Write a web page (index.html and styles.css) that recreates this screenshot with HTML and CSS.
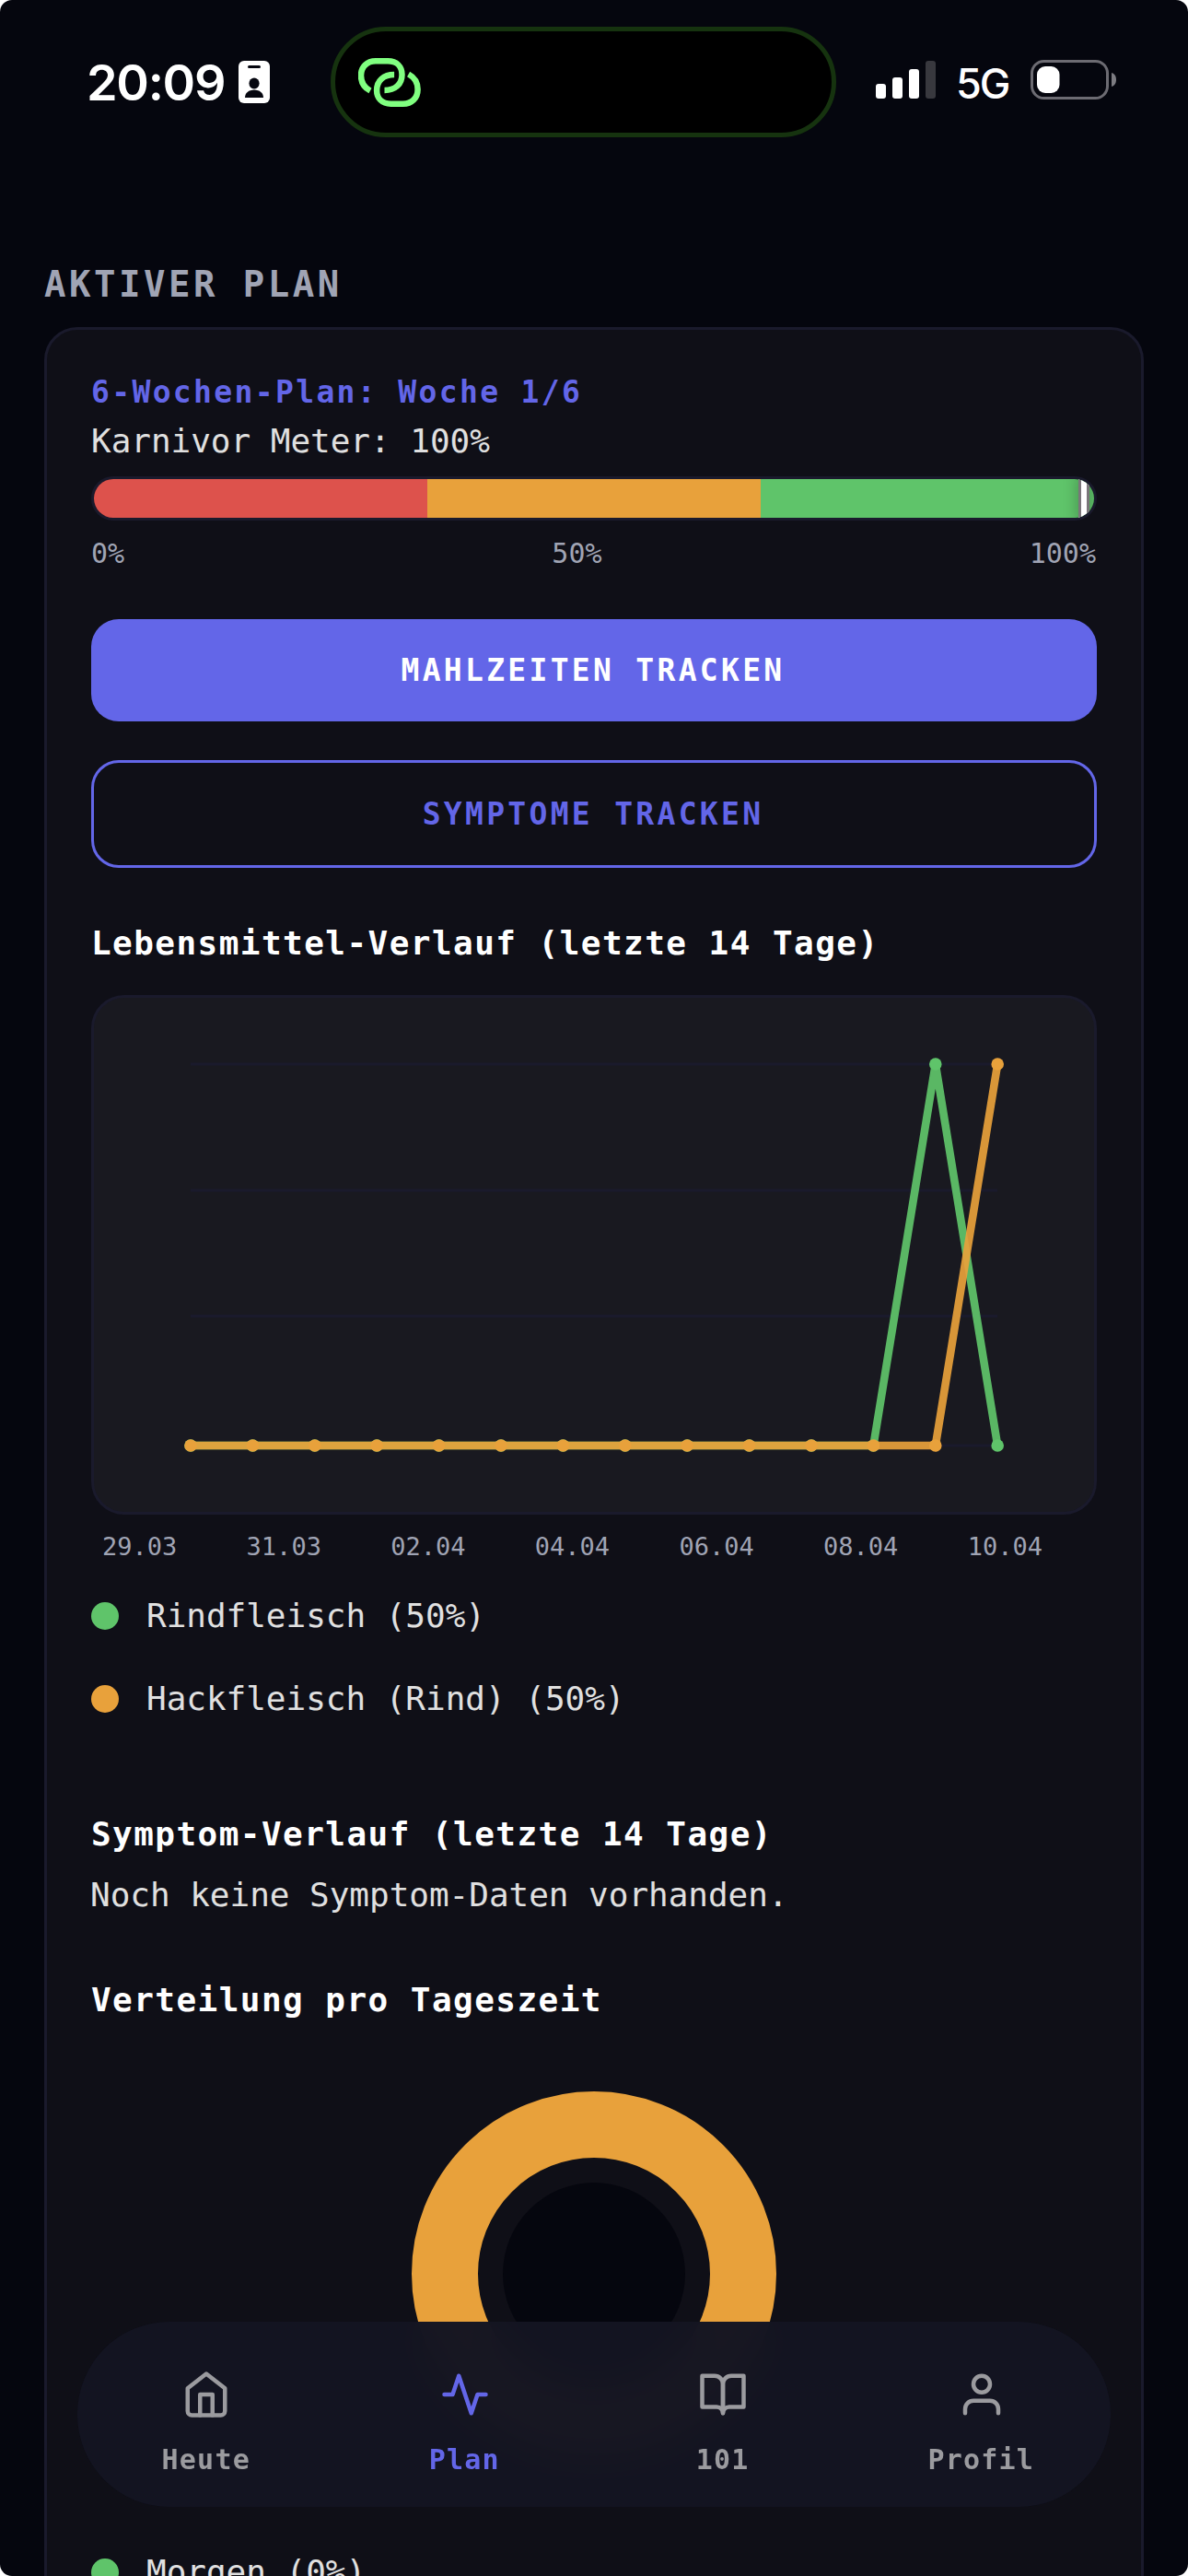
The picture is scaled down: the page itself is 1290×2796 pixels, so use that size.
FILE: index.html
```
<!DOCTYPE html>
<html lang="de">

<head>
  <meta charset="UTF-8">
  <meta name="viewport" content="width=device-width, initial-scale=1.0">
  <title>Plan</title>
  <link rel="stylesheet" href="styles.css">
</head>

<body>
  <div class="screen">
    <!-- status bar -->
    <div class="statusbar">
      <div class="status-left">
        <span class="time">20:09</span>
        <svg class="badge-icon" width="34" height="46" viewBox="0 0 34 46">
          <rect width="34" height="46" rx="6" fill="#fff" />
          <rect x="10" y="5" width="14" height="3" rx="1.500" fill="#05060f" />
          <ellipse cx="17" cy="24.500" rx="5.600" ry="6" fill="#05060f" />
          <path d="M7 40c0-5 4-8.500 10-8.500s10 3.500 10 8.500z" fill="#05060f" />
        </svg>
      </div>
      <div class="island">
        <svg width="68" height="53" viewBox="0 0 68 53" fill="none" stroke="#80ff80" stroke-width="6.500">
          <path d="M13 35.500C6.500 32 3 26 3 19C3 9.500 9.500 3.300 19 3.300H32C42 3.300 47.500 9.500 47.500 18C47.500 28.500 40 35 28.500 35" />
          <path d="M13 35.500C6.500 32 3 26 3 19C3 9.500 9.500 3.300 19 3.300H32C42 3.300 47.500 9.500 47.500 18C47.500 28.500 40 35 28.500 35" transform="rotate(180 33.800 26.500)" />
        </svg>
      </div>
      <div class="status-right">
        <svg width="65" height="42" viewBox="0 0 65 42" fill="#fff">
          <rect x="0" y="25" width="11" height="16" rx="3" />
          <rect x="18" y="18" width="11" height="23" rx="3" />
          <rect x="36" y="9" width="11" height="32" rx="3" />
          <rect x="54" y="0" width="11" height="41" rx="3" fill="#38383e" />
        </svg>
        <span class="network">5G</span>
        <svg class="battery" width="93" height="43" viewBox="0 0 93 43">
          <rect x="1.500" y="1.500" width="82" height="40" rx="13" fill="none" stroke="#6c6b72" stroke-width="3" />
          <rect x="7" y="7" width="24.500" height="29" rx="9" fill="#fff" />
          <path d="M88 14c3.500 1 5 4 5 7.500s-1.500 6.500-5 7.500z" fill="#7d7c82" />
        </svg>
      </div>
    </div>

    <div class="content">
      <h1 class="page-title">AKTIVER PLAN</h1>

      <div class="card">
        <div class="plan-title">6-Wochen-Plan: Woche 1/6</div>
        <div class="text meter-text">Karnivor Meter: 100%</div>
        <div class="meter">
          <div class="zone red"></div>
          <div class="zone orange"></div>
          <div class="zone green"></div>
          <div class="marker"></div>
        </div>
        <div class="meter-scale">
          <span>0%</span>
          <span>50%</span>
          <span>100%</span>
        </div>

        <button class="btn btn-primary">MAHLZEITEN TRACKEN</button>
        <button class="btn btn-outline">SYMPTOME TRACKEN</button>

        <h2 class="heading food-heading">Lebensmittel-Verlauf (letzte 14 Tage)</h2>
        <div class="chart">
          <svg id="chart" width="1086" height="558" viewBox="0 0 1086 558"></svg>
        </div>
        <div class="dates">
          <span>29.03</span>
          <span>31.03</span>
          <span>02.04</span>
          <span>04.04</span>
          <span>06.04</span>
          <span>08.04</span>
          <span>10.04</span>
        </div>
        <div class="legend">
          <div class="legend-item"><i class="dot green"></i>Rindfleisch (50%)</div>
          <div class="legend-item"><i class="dot orange"></i>Hackfleisch (Rind) (50%)</div>
        </div>

        <h2 class="heading symptom-heading">Symptom-Verlauf (letzte 14 Tage)</h2>
        <div class="text empty-text">Noch keine Symptom-Daten vorhanden.</div>

        <h2 class="heading time-heading">Verteilung pro Tageszeit</h2>
        <svg class="donut" width="396" height="396" viewBox="0 0 396 396">
          <circle cx="198" cy="198" r="162" fill="none" stroke="#e8a13b" stroke-width="72" />
          <circle cx="198" cy="198" r="99" fill="#05060e" />
        </svg>
        <div class="legend time-legend">
          <div class="legend-item"><i class="dot green"></i>Morgen (0%)</div>
        </div>
      </div>
    </div>

    <!-- tab bar -->
    <div class="tabbar">
      <div class="tab">
        <svg class="icon" viewBox="0 0 24 24">
          <path d="M3 9l9-7 9 7v11a2 2 0 0 1-2 2H5a2 2 0 0 1-2-2z" />
          <path d="M9 22V12h6v10" />
        </svg>
        <span class="tab-label">Heute</span>
      </div>
      <div class="tab active">
        <svg class="icon" viewBox="0 0 24 24">
          <path d="M22 12h-4l-3 9L9 3l-3 9H2" />
        </svg>
        <span class="tab-label">Plan</span>
      </div>
      <div class="tab">
        <svg class="icon" viewBox="0 0 24 24">
          <path d="M2 3h6a4 4 0 0 1 4 4v14a3 3 0 0 0-3-3H2z" />
          <path d="M22 3h-6a4 4 0 0 0-4 4v14a3 3 0 0 1 3-3h7z" />
        </svg>
        <span class="tab-label">101</span>
      </div>
      <div class="tab">
        <svg class="icon" viewBox="0 0 24 24">
          <path d="M20 21v-2a4 4 0 0 0-4-4H8a4 4 0 0 0-4 4v2" />
          <circle cx="12" cy="7" r="4" />
        </svg>
        <span class="tab-label">Profil</span>
      </div>
    </div>
  </div>

  <script src="chart.js"></script>
</body>

</html>
```

FILE: styles.css
```
* {
  box-sizing: border-box;
}

body {
  margin: 0;
  background-color: #fff;
  font-family: 'DejaVu Sans Mono', Menlo, monospace;
}

.screen {
  position: relative;
  width: 1290px;
  height: 2796px;
  overflow: hidden;
  border-radius: 13px;
  background-color: #05060e;
}

/* status bar */
.statusbar {
  display: flex;
  height: 177px;
  padding-top: 29px;
  font-family: Inter, 'Liberation Sans', sans-serif;
  color: #fff;
}

.status-left {
  display: flex;
  align-items: center;
  width: 359px;
  height: 120px;
  padding-left: 94px;
}

.time {
  width: 165px;
  font-size: 54px;
  font-weight: 600;
  letter-spacing: -1.3px;
  white-space: nowrap;
}

.island {
  display: flex;
  align-items: center;
  width: 549px;
  height: 120px;
  padding-left: 25px;
  border: 5px solid #16330f;
  border-radius: 60px;
  background-color: #000;
}

.status-right {
  display: flex;
  align-items: center;
  height: 120px;
  padding-left: 43px;
}

.status-right svg {
  margin-bottom: 4px;
}

.network {
  width: 79px;
  padding-top: 2px;
  padding-left: 22px;
  font-size: 45px;
  font-weight: 500;
  letter-spacing: -2px;
}

.status-right .battery {
  margin-left: 24px;
  margin-bottom: 5px;
}

/* page */
.content {
  padding: 108px 48px 0;
}

.page-title {
  margin: 0 0 22px;
  font-size: 39px;
  line-height: 48px;
  letter-spacing: 3.5px;
  color: #a0a4b4;
}

.card {
  height: 2600px;
  padding: 48px;
  border: 3px solid #1a1a2c;
  border-radius: 36px;
  background-color: #0f0f17;
}

.plan-title {
  font-size: 33px;
  font-weight: bold;
  line-height: 39px;
  letter-spacing: 2.35px;
  color: #6366e8;
}

.text {
  font-size: 36px;
  line-height: 48px;
  letter-spacing: -0.03px;
  color: #e0e0e0;
}

.meter-text {
  margin: 10px 0 14px;
}

.meter {
  position: relative;
  display: flex;
  height: 48px;
  overflow: hidden;
  border: 3px solid #1a1a2c;
  border-radius: 24px;
}

.zone {
  flex: 1;
}

.red {
  background-color: #dd524c;
}

.orange {
  background-color: #e8a13b;
}

.green {
  background-color: #5fc46a;
}

.marker {
  position: absolute;
  top: -6px;
  right: 5px;
  width: 12px;
  height: 54px;
  border: 3px solid #7a7579;
  background-color: #fff;
  box-shadow: 0 0 16px rgba(0, 0, 0, 0.3);
}

.meter-scale {
  display: flex;
  justify-content: space-between;
  margin-top: 18px;
  padding-right: 1px;
  font-size: 30px;
  line-height: 36px;
  color: #a0a4b4;
}

.btn {
  display: block;
  width: 100%;
  padding: 0 2px 0 0;
  border: none;
  border-radius: 30px;
  font-family: inherit;
  font-size: 33px;
  font-weight: bold;
  letter-spacing: 3.3px;
}

.btn-primary {
  height: 111px;
  margin-top: 53px;
  background-color: #6366e8;
  color: #fff;
}

.btn-outline {
  height: 117px;
  margin-top: 42px;
  border: 3px solid #6366e8;
  background-color: transparent;
  color: #6366e8;
}

.heading {
  margin: 0;
  font-size: 36px;
  line-height: 48px;
  letter-spacing: 1.45px;
  color: #fff;
}

.food-heading {
  margin-top: 58px;
}

.chart {
  height: 564px;
  margin-top: 32px;
  overflow: hidden;
  border: 3px solid #1a1a2c;
  border-radius: 36px;
  background-color: #191920;
}

.chart svg {
  display: block;
}

.dates {
  display: flex;
  justify-content: space-between;
  margin-top: 19px;
  padding: 0 59px 0 12px;
  font-size: 27px;
  line-height: 32px;
  color: #a0a4b4;
}

.legend {
  display: flex;
  flex-direction: column;
  gap: 42px;
  margin-top: 35px;
}

.legend-item {
  display: flex;
  align-items: center;
  gap: 30px;
  font-size: 36px;
  line-height: 48px;
  letter-spacing: -0.03px;
  color: #e0e0e0;
}

.dot {
  width: 30px;
  height: 30px;
  border-radius: 50%;
}

.symptom-heading {
  margin-top: 99px;
}

.empty-text {
  margin-top: 18px;
  margin-left: -1px;
}

.time-heading {
  margin-top: 66px;
}

.donut {
  display: block;
  margin: 75px auto 0;
}

.time-legend {
  margin-top: 102px;
}

/* tab bar */
.tabbar {
  position: absolute;
  left: 84px;
  right: 84px;
  top: 2520px;
  display: flex;
  height: 201px;
  border-radius: 100px;
  background-color: rgba(19, 20, 34, 0.98);
  backdrop-filter: blur(24px);
}

.tab {
  flex: 1;
  display: flex;
  flex-direction: column;
  align-items: center;
  padding-top: 52px;
  color: #9b9b9f;
}

.tab-label {
  padding-right: 1px;
  font-size: 30px;
  font-weight: bold;
  line-height: 36px;
  letter-spacing: 1.2px;
}

.icon {
  width: 54px;
  height: 54px;
  margin-bottom: 26px;
  fill: none;
  stroke: currentColor;
  stroke-width: 2;
  stroke-linecap: round;
  stroke-linejoin: round;
}

.active {
  color: #6366e8;
}
```

FILE: chart.js
```
var series = [
  { color: '#5fc46a', values: [0, 0, 0, 0, 0, 0, 0, 0, 0, 0, 0, 0, 1, 0] },
  { color: '#e8a13b', values: [0, 0, 0, 0, 0, 0, 0, 0, 0, 0, 0, 0, 0, 1] }
];
var left = 105;
var step = 67.4;
var topY = 72;
var bottomY = 486;
var out = '';

// grid
[72, 209, 345.5, 486].forEach(function (y) {
  out += '<line x1="' + left + '" x2="981" y1="' + y + '" y2="' + y + '" stroke="#1a1a2c" stroke-width="3"/>';
});

// lines and points
series.forEach(function (s) {
  var points = s.values.map(function (v, i) {
    return [left + i * step, bottomY - v * (bottomY - topY)];
  });
  out += '<polyline points="' + points.join(' ') + '" fill="none" stroke="' + s.color + '" stroke-width="8.6" stroke-linejoin="round" opacity="0.92"/>';
  points.forEach(function (p) {
    out += '<circle cx="' + p[0] + '" cy="' + p[1] + '" r="6.8" fill="' + s.color + '"/>';
  });
});

document.querySelector('#chart').innerHTML = out;
```
